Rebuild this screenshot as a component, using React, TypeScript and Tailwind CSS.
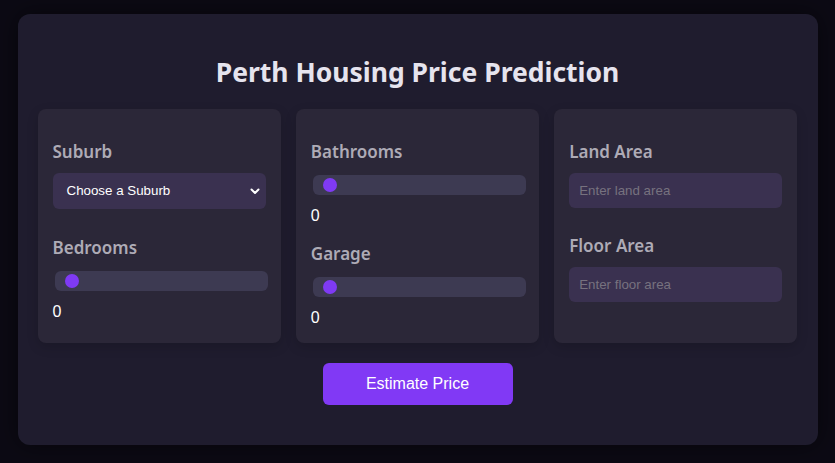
import React from 'react';

const labelCls =
  "block text-[17px] leading-[24px] font-semibold text-[#aeabb6] [font-family:'Noto_Sans',sans-serif]";

const Slider = () => (
  <div className="ml-[2px] h-[20px] w-full rounded-[6px] bg-[#3d3a52] flex items-center">
    <div className="ml-[10px] h-[14px] w-[14px] rounded-full bg-[#7f3af4]" />
  </div>
);

const Value = () => (
  <div className="text-[16px] leading-[20px] text-white [font-family:'Liberation_Sans',Arial,sans-serif]">0</div>
);

const Card = ({ children }: { children: React.ReactNode }) => (
  <div className="rounded-[8px] bg-[#2b2738] px-[15px] pt-[31px] pb-[15px] shadow-[0_4px_12px_rgba(0,0,0,0.15)]">
    {children}
  </div>
);

export default function App() {
  return (
    <div className="min-h-[463px] bg-[#0c0a14] pt-[14px] pb-[18px]">
      <div className="mx-auto w-[800px] rounded-[12px] bg-[#1f1c2e] px-[20px] pt-[20px] pb-[40px] shadow-[0_0_24px_rgba(0,0,0,0.5)]">
        <h1 className="mt-[20px] mb-[19px] text-center text-[26.5px] leading-[36px] font-bold text-[#e6e4ee] [font-family:'Noto_Sans',sans-serif]">
          Perth Housing Price Prediction
        </h1>

        <div className="grid grid-cols-3 gap-[15px]">
          <Card>
            <label className={labelCls}>Suburb</label>
            <div className="mt-[9px] flex h-[36px] items-center justify-between rounded-[6px] bg-[#3a3150] pl-[14px] pr-[6px]">
              <span className="text-[13.33px] text-white [font-family:'Liberation_Sans',Arial,sans-serif]">Choose a Suburb</span>
              <svg width="10" height="10" viewBox="0 0 10 10" fill="none">
                <path d="M1.5 3.5 L5 7 L8.5 3.5" stroke="white" strokeWidth="2" strokeLinecap="round" strokeLinejoin="round" />
              </svg>
            </div>
            <label className={`${labelCls} mt-[27px]`}>Bedrooms</label>
            <div className="mt-[11px]">
              <Slider />
            </div>
            <div className="mt-[11px]">
              <Value />
            </div>
          </Card>

          <Card>
            <label className={labelCls}>Bathrooms</label>
            <div className="mt-[11px]">
              <Slider />
            </div>
            <div className="mt-[11px]">
              <Value />
            </div>
            <label className={`${labelCls} mt-[16px]`}>Garage</label>
            <div className="mt-[11px]">
              <Slider />
            </div>
            <div className="mt-[11px]">
              <Value />
            </div>
          </Card>

          <Card>
            <label className={labelCls}>Land Area</label>
            <input
              placeholder="Enter land area"
              className="mt-[9px] block h-[35px] w-full rounded-[6px] bg-[#3a3150] px-[10px] text-[13.33px] text-white outline-none placeholder:text-[#77727f] [font-family:'Liberation_Sans',Arial,sans-serif]"
            />
            <label className={`${labelCls} mt-[26px]`}>Floor Area</label>
            <input
              placeholder="Enter floor area"
              className="mt-[9px] block h-[35px] w-full rounded-[6px] bg-[#3a3150] px-[10px] text-[13.33px] text-white outline-none placeholder:text-[#77727f] [font-family:'Liberation_Sans',Arial,sans-serif]"
            />
          </Card>
        </div>

        <div className="mt-[20px] flex justify-center">
          <button className="h-[42px] w-[190px] rounded-[6px] bg-[#8139f5] text-[16px] text-white [font-family:'Liberation_Sans',Arial,sans-serif]">
            Estimate Price
          </button>
        </div>
      </div>
    </div>
  );
}
